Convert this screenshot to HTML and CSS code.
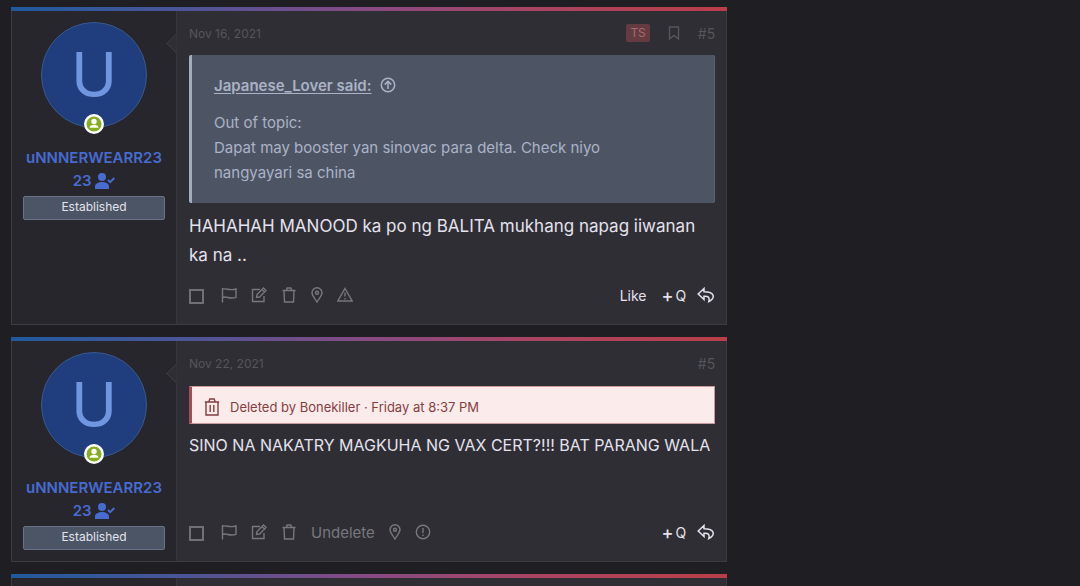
FILE: index.html
```html
<!DOCTYPE html>
<html lang="en">
<head>
<meta charset="utf-8">
<meta name="viewport" content="width=device-width, initial-scale=1">
<title>Forum thread</title>
<link rel="stylesheet" href="styles.css">
</head>
<body>
<svg class="sprite" aria-hidden="true">
  <symbol id="i-flag" viewBox="0 0 16 16"><path d="M1.500 1v14.500M1.500 2.200c4-1.600 6.500 2 13.500-.2v8.300c-6.500 2.200-9.500-1.600-13.500.2"/></symbol>
  <symbol id="i-edit" viewBox="0 0 16 16"><path d="M9 2.500H1.500v12H13V9M5.500 10.500l.5-3L12.500 1 15 3.500 8.500 10zM11 2.500 13.500 5"/></symbol>
  <symbol id="i-trash" viewBox="0 0 16 16"><path d="M1.500 3.500h13M5.200 3.500l1-2.500h3.600l1 2.500M3 3.500l.5 11.500h9l.5-11.500"/></symbol>
  <symbol id="i-bin" viewBox="0 0 16 18"><path d="M.8 4h14.400M4.800 4l1-3h4.400l1 3M2 4v13h12V4M6.200 7v7M9.800 7v7"/></symbol>
  <symbol id="i-pin" viewBox="0 0 12 16"><path d="M6 15C4.500 12 1 9 1 5.800a5 5 0 0 1 10 0C11 9 7.500 12 6 15z"/><circle cx="6" cy="5.800" r="1.500"/></symbol>
  <symbol id="i-warn" viewBox="0 0 16 16"><path d="M8 1.500 15.200 14H.8zM8 5.500v4M8 11v1.500"/></symbol>
  <symbol id="i-alert" viewBox="0 0 16 16"><circle cx="8" cy="8" r="6.700"/><path d="M8 4v5M8 10.500V12"/></symbol>
  <symbol id="i-reply" viewBox="0 0 18 16"><path d="M7 1.500 1.200 7 7 12.500V9.300c4-.3 6 .7 4.800 5.200C18.500 11 18 4.700 7 4.700z"/></symbol>
  <symbol id="i-up" viewBox="0 0 16 16"><circle cx="8" cy="8" r="6.700"/><path d="M8 12V4.500M4.700 7.600 8 4.300l3.300 3.300"/></symbol>
  <symbol id="i-bookmark" viewBox="0 0 12 14"><path d="M1.500 1h9v12L6 9.500 1.500 13z"/></symbol>
  <symbol id="i-online" viewBox="0 0 20 20"><circle cx="10" cy="10" r="10" fill="#fff"/><circle cx="10" cy="10" r="7.500" fill="#85ae22"/><circle cx="10" cy="7.500" r="2.700" fill="#fff"/><path d="M5.500 13.800c0-4 9-4 9 0z" fill="#fff"/></symbol>
  <symbol id="i-usercheck" viewBox="0 0 20 16"><circle cx="7" cy="4" r="4"/><path d="M0 16v-2.500C0 7.500 14 7.500 14 13.500V16z"/><path class="check" d="m13 7 2.200 2.200L19.300 5"/></symbol>
</svg>

<main class="thread">
  <article class="post">
    <aside class="user">
      <a class="avatar" href="#">U<svg class="online" role="img" aria-label="Online"><use href="#i-online"/></svg></a>
      <a class="name" href="#">uNNNERWEARR23<wbr>23 <svg class="usercheck" aria-hidden="true"><use href="#i-usercheck"/></svg></a>
      <span class="rank">Established</span>
    </aside>
    <div class="content">
      <header class="meta">
        <time datetime="2021-11-16">Nov 16, 2021</time>
        <span class="starter">TS</span>
        <button class="bookmark" aria-label="Bookmark"><svg class="icon"><use href="#i-bookmark"/></svg></button>
        <a class="number" href="#">#5</a>
      </header>
      <blockquote class="quote">
        <a class="quote-source" href="#"><span>Japanese_Lover said:</span><svg class="icon"><use href="#i-up"/></svg></a>
        <p>Out of topic:<br>Dapat may booster yan sinovac para delta. Check niyo nangyayari sa china</p>
      </blockquote>
      <p class="message">HAHAHAH MANOOD ka po ng BALITA mukhang napag iiwanan ka na ..</p>
      <footer class="actions">
        <input type="checkbox" aria-label="Select post">
        <button aria-label="Report"><svg class="icon"><use href="#i-flag"/></svg></button>
        <button aria-label="Edit"><svg class="icon"><use href="#i-edit"/></svg></button>
        <button aria-label="Delete"><svg class="icon"><use href="#i-trash"/></svg></button>
        <button aria-label="IP address"><svg class="icon narrow"><use href="#i-pin"/></svg></button>
        <button aria-label="Warn"><svg class="icon"><use href="#i-warn"/></svg></button>
        <div class="respond">
          <button class="like">Like</button>
          <button class="multiquote"><b>+</b>Q</button>
          <button aria-label="Reply"><svg class="icon wide"><use href="#i-reply"/></svg></button>
        </div>
      </footer>
    </div>
  </article>

  <article class="post">
    <aside class="user">
      <a class="avatar" href="#">U<svg class="online" role="img" aria-label="Online"><use href="#i-online"/></svg></a>
      <a class="name" href="#">uNNNERWEARR23<wbr>23 <svg class="usercheck" aria-hidden="true"><use href="#i-usercheck"/></svg></a>
      <span class="rank">Established</span>
    </aside>
    <div class="content">
      <header class="meta">
        <time datetime="2021-11-22">Nov 22, 2021</time>
        <a class="number" href="#">#5</a>
      </header>
      <div class="notice"><svg class="bin" aria-hidden="true"><use href="#i-bin"/></svg>Deleted by Bonekiller · Friday at 8:37 PM</div>
      <p class="message deleted">SINO NA NAKATRY MAGKUHA NG VAX CERT?!!! BAT PARANG WALA</p>
      <footer class="actions">
        <input type="checkbox" aria-label="Select post">
        <button aria-label="Report"><svg class="icon"><use href="#i-flag"/></svg></button>
        <button aria-label="Edit"><svg class="icon"><use href="#i-edit"/></svg></button>
        <button aria-label="Delete"><svg class="icon"><use href="#i-trash"/></svg></button>
        <button class="undelete">Undelete</button>
        <button aria-label="IP address"><svg class="icon narrow"><use href="#i-pin"/></svg></button>
        <button aria-label="Warn"><svg class="icon"><use href="#i-alert"/></svg></button>
        <div class="respond">
          <button class="multiquote"><b>+</b>Q</button>
          <button aria-label="Reply"><svg class="icon wide"><use href="#i-reply"/></svg></button>
        </div>
      </footer>
    </div>
  </article>

  <article class="post">
    <aside class="user"></aside>
    <div class="content"></div>
  </article>
</main>
</body>
</html>
```
FILE: styles.css
```css
* { box-sizing: border-box; }
html { height: 100%; overflow: hidden; background: #1f1e23; }
body {
  height: 100%;
  margin: 0;
  padding: 7px 0 0 11px;
  overflow: hidden;
  color: #e4e2ee;
  font-family: Inter, "Open Sans", sans-serif;
  font-size: 15px;
}
p, blockquote { margin: 0; }
a { color: inherit; text-decoration: none; }
button {
  display: flex;
  align-items: center;
  padding: 0;
  border: 0;
  background: none;
  color: inherit;
  font: inherit;
  cursor: pointer;
}
.sprite { position: absolute; width: 0; height: 0; }
.icon, .bin { width: 16px; height: 16px; flex: none; fill: none; stroke: currentColor; stroke-width: 1.4; }
.icon.narrow { width: 12px; }
.icon.wide { width: 18px; stroke-width: 1.5; }

.thread { display: flex; flex-direction: column; gap: 12px; width: 67%; }
.post {
  display: grid;
  grid-template-columns: 165px minmax(0, 1fr);
  position: relative;
  padding-top: 4px;
  border: 1px solid #3b3b42;
  border-top: 0;
  background: #2f2e34;
}
.post::before {
  content: "";
  position: absolute;
  inset: 0 -1px auto;
  height: 4px;
  background: linear-gradient(90deg, #1f5a9d, #4b5597 24%, #874a83 50%, #a94463 72%, #b93e48);
}

.user {
  display: flex;
  flex-direction: column;
  align-items: center;
  position: relative;
  min-height: 24px;
  padding: 11px 11px 10px;
  border-right: 1px solid #36363c;
  background: #26262c;
  text-align: center;
}
.user:not(:empty)::after {
  content: "";
  position: absolute;
  top: 25px;
  right: -8px;
  width: 14px;
  height: 14px;
  border: solid #3e3e44;
  border-width: 0 0 1px 1px;
  background: #2f2e34;
  transform: rotate(45deg);
  clip-path: polygon(0 0, 100% 100%, 0 100%);
}
.avatar {
  display: grid;
  place-items: center;
  position: relative;
  width: 106px;
  height: 106px;
  margin-bottom: 18px;
  border: 1px solid #39598c;
  border-radius: 50%;
  background: #203d7d;
  color: #7096df;
  font-size: 62px;
  line-height: 1;
}
.online { position: absolute; bottom: -7px; left: 42px; width: 20px; height: 20px; }
.name { color: #476bd0; font-size: 15px; font-weight: 600; line-height: 23px; }
.usercheck { width: 20px; height: 16px; vertical-align: -3px; fill: currentColor; }
.check { fill: none; stroke: currentColor; stroke-width: 2; }
.rank {
  align-self: stretch;
  height: 24px;
  margin-top: 4px;
  border: 1px solid #697386;
  border-radius: 2px;
  background: #4c5566;
  color: #e2e3eb;
  font-size: 12px;
  line-height: 20px;
}

.content { padding: 0 11px 17px 12px; }
.post:last-child .content { padding: 0; }
.meta {
  display: flex;
  align-items: center;
  height: 44px;
  color: #55555b;
  font-size: 12px;
}
.meta time { margin-right: auto; }
.starter {
  padding: 0 4px;
  border-radius: 2px;
  background: #633b41;
  color: #a56b6e;
  line-height: 18px;
}
.bookmark { margin: 0 18px; }
.bookmark .icon { width: 12px; height: 14px; }
.number { font-size: 14px; }

.quote {
  padding: 18px 36px 17px 22px;
  border: 1px solid #596273;
  border-width: 0 1px 0 3px;
  border-left-color: #a4adc0;
  border-radius: 2px;
  background: #4d5565;
  color: #abb2c6;
  line-height: 25px;
}
.quote-source { display: flex; align-items: center; gap: 8px; height: 24px; margin-bottom: 13px; font-weight: 600; }
.quote-source span { text-decoration: underline; text-underline-offset: 2px; }
.quote-source .icon { stroke-width: 1.5; }
.quote p { margin-bottom: 1px; }
.message { margin: 9px 0 13px; font-size: 17px; line-height: 29px; }
.message.deleted { min-height: 76px; margin-top: 7px; font-size: 16px; }
.notice {
  display: flex;
  align-items: center;
  gap: 10px;
  height: 38px;
  margin-top: 1px;
  padding: 3px 12px 0;
  border: solid #c8989c;
  border-width: 1px 1px 1px 3px;
  border-left-color: #a34d57;
  background: #fbebea;
  color: #853f43;
  font-size: 13px;
}
.bin { height: 18px; }

.actions { display: flex; align-items: center; gap: 14px; height: 24px; color: #77777e; }
.actions input {
  appearance: none;
  width: 15px;
  height: 15px;
  margin: 2px 3px 0 0;
  border: 2px solid #707077;
}
.respond { display: flex; align-items: center; gap: 11px; margin-left: auto; color: #e4e2ee; font-size: 14px; }
.like { margin-right: 4px; }
.multiquote { gap: 2px; }
.multiquote b { font-size: 18px; font-weight: 500; }
```
